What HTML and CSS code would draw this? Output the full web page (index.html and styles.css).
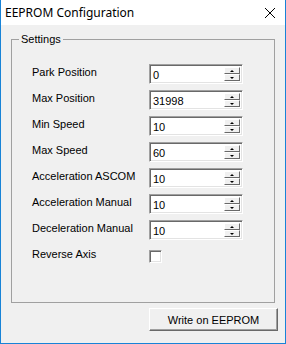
FILE: index.html
```html
<!DOCTYPE html>
<html lang="en">
<head>
  <meta charset="UTF-8" />
  <title>EEPROM Configuration</title>
  <link rel="stylesheet" href="styles.css">
</head>
<body>
  <div class="window">
    <div class="titlebar">
      <span class="title">EEPROM Configuration</span>
      <svg class="close" width="12" height="12" viewBox="0 0 12 12">
        <path d="M1 1 L11 11 M11 1 L1 11" stroke="#000" stroke-width="1" fill="none" />
      </svg>
    </div>
    <div class="client">
      <fieldset class="group">
        <legend>Settings</legend>
        <div class="form">
          <label>Park Position</label>
          <div class="spin"><span class="val">0</span><span class="btns"><span class="btn up"></span><span class="btn down"></span></span></div>

          <label>Max Position</label>
          <div class="spin"><span class="val">31998</span><span class="btns"><span class="btn up"></span><span class="btn down"></span></span></div>

          <label>Min Speed</label>
          <div class="spin"><span class="val">10</span><span class="btns"><span class="btn up"></span><span class="btn down"></span></span></div>

          <label>Max Speed</label>
          <div class="spin"><span class="val">60</span><span class="btns"><span class="btn up"></span><span class="btn down"></span></span></div>

          <label>Acceleration ASCOM</label>
          <div class="spin"><span class="val">10</span><span class="btns"><span class="btn up"></span><span class="btn down"></span></span></div>

          <label>Acceleration Manual</label>
          <div class="spin"><span class="val">10</span><span class="btns"><span class="btn up"></span><span class="btn down"></span></span></div>

          <label>Deceleration Manual</label>
          <div class="spin"><span class="val">10</span><span class="btns"><span class="btn up"></span><span class="btn down"></span></span></div>

          <label>Reverse Axis</label>
          <div class="checkcell"><span class="check"></span></div>
        </div>
      </fieldset>
      <div class="actions">
        <button type="button">Write on EEPROM</button>
      </div>
    </div>
  </div>
</body>
</html>
```

FILE: styles.css
```css
body {
  margin: 0;
  font-family: 'Liberation Sans', Arial, sans-serif;
  font-size: 11px;
  color: #000;
  background: #fff;
}
.window {
  width: 286px;
  height: 344px;
  box-sizing: border-box;
  border: 1px solid #1883d7;
  border-top: none;
  background: #f0f0f0;
  display: flex;
  flex-direction: column;
}
.titlebar {
  height: 25px;
  background: #fff;
  display: flex;
  align-items: center;
  justify-content: space-between;
  padding: 0 9px 0 4px;
}
.title {
  font-family: 'Noto Sans', sans-serif;
  font-size: 12px;
  line-height: 16px;
  margin-top: 1px;
}
.close {
  display: block;
  margin-top: 1px;
}
.client {
  flex: 1;
  display: flex;
  flex-direction: column;
}
.group {
  margin: 8px 10px 0;
  padding: 18px 0 0 20px;
  border: 1px solid #a0a0a0;
  height: 270px;
  box-sizing: border-box;
}
.group legend {
  padding: 0 2px;
  margin-left: -13px;
  line-height: 13px;
}
.form {
  display: grid;
  grid-template-columns: 117px 94px;
  grid-auto-rows: 20px;
  row-gap: 6px;
}
.form label {
  padding-top: 2px;
  line-height: 13px;
  white-space: nowrap;
}
.spin {
  display: flex;
  background: #fff;
  border-top: 1px solid #a0a0a0;
  border-left: 1px solid #a0a0a0;
  border-right: 1px solid #fff;
  border-bottom: 1px solid #fff;
  box-shadow: inset 1px 1px 0 #696969, inset -1px -1px 0 #e3e3e3;
  box-sizing: border-box;
  padding: 2px 2px 2px 3px;
}
.val {
  flex: 1;
  line-height: 15px;
  padding-top: 1px;
}
.btns {
  width: 16px;
  display: flex;
  flex-direction: column;
}
.btn {
  flex: 1;
  background: #f0f0f0;
  border-top: 1px solid #fff;
  border-left: 1px solid #fff;
  border-right: 1px solid #696969;
  border-bottom: 1px solid #696969;
  box-sizing: border-box;
  display: flex;
  align-items: center;
  justify-content: center;
}
.btn::after {
  content: "";
  width: 0;
  height: 0;
  border-left: 2px solid transparent;
  border-right: 2px solid transparent;
}
.up::after {
  border-bottom: 2px solid #000;
}
.down::after {
  border-top: 2px solid #000;
}
.checkcell {
  padding-top: 4px;
}
.check {
  display: block;
  width: 13px;
  height: 13px;
  box-sizing: border-box;
  background: #fff;
  border-top: 1px solid #a0a0a0;
  border-left: 1px solid #a0a0a0;
  border-right: 1px solid #fff;
  border-bottom: 1px solid #fff;
  box-shadow: inset 1px 1px 0 #696969, inset -1px -1px 0 #e3e3e3;
}
.actions {
  display: flex;
  justify-content: flex-end;
  padding: 5px 7px 0 0;
}
.actions button {
  width: 129px;
  height: 23px;
  font-family: 'Liberation Sans', Arial, sans-serif;
  font-size: 11px;
  color: #000;
  background: #f0f0f0;
  border-top: 1px solid #fff;
  border-left: 1px solid #fff;
  border-right: 1px solid #696969;
  border-bottom: 1px solid #696969;
  box-shadow: inset -1px -1px 0 #a0a0a0;
  padding: 0;
}
```
